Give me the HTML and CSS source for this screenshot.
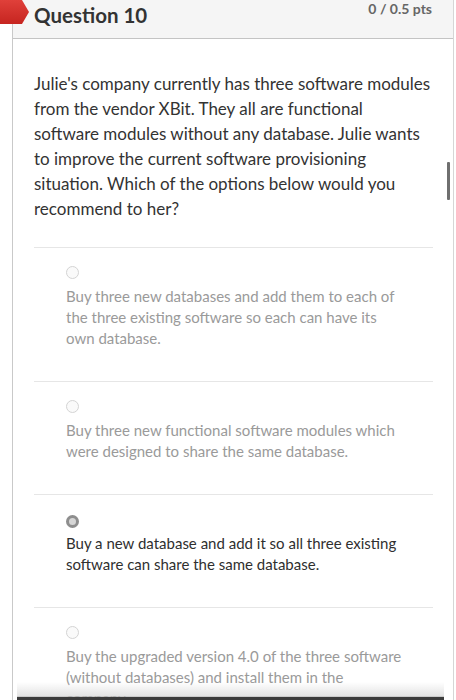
FILE: index.html
```html
<!DOCTYPE html>
<html lang="en">
<head>
<meta charset="utf-8">
<title>Question 10</title>
<link rel="stylesheet" href="styles.css">
</head>
<body>
<div class="card">
  <div class="flag"></div>
  <div class="header">
    <h2 class="title">Question 10</h2>
    <span class="pts">0 / 0.5 pts</span>
  </div>
  <div class="body">
    <p class="question">Julie's company currently has three software modules from the vendor XBit. They all are functional software modules without any database. Julie wants to improve the current software provisioning situation. Which of the options below would you recommend to her?</p>
    <div class="answers">
      <div class="answer">
        <span class="radio"></span>
        <p class="atext">Buy three new databases and add them to each of the three existing software so each can have its own database.</p>
      </div>
      <div class="answer">
        <span class="radio"></span>
        <p class="atext">Buy three new functional software modules which were designed to share the same database.</p>
      </div>
      <div class="answer selected">
        <span class="radio"></span>
        <p class="atext">Buy a new database and add it so all three existing software can share the same database.</p>
      </div>
      <div class="answer">
        <span class="radio"></span>
        <p class="atext">Buy the upgraded version 4.0 of the three software (without databases) and install them in the company.</p>
      </div>
    </div>
  </div>
  <div class="scrollbar"></div>
</div>
<div class="bottom-edge"></div>
</body>
</html>
```
FILE: styles.css
```css
html, body {
  margin: 0;
  padding: 0;
  background: #ffffff;
  height: 700px;
  overflow: hidden;
}
body {
  font-family: Lato, "Open Sans", Arial, sans-serif;
  color: #333333;
  position: relative;
}
.card {
  margin-left: 12px;
  width: 440px;
  border-left: 1px solid #c9c9c9;
  border-right: 1px solid #d6d6d6;
  min-height: 700px;
  position: relative;
}
.flag {
  position: absolute;
  left: -13px;
  top: 0;
  width: 29px;
  height: 24px;
  background: linear-gradient(180deg, #e0403a 0%, #c62520 100%);
  clip-path: polygon(0 0, 22px 0, 29px 12px, 22px 24px, 0 24px);
  z-index: 2;
}
.header {
  height: 38px;
  background: #f5f5f5;
  border-bottom: 1px solid #c4c4c4;
  display: flex;
  justify-content: space-between;
  align-items: flex-start;
  padding: 0 21px 0 21px;
}
.title {
  margin: 0;
  font-size: 20.5px;
  font-weight: 700;
  line-height: 20px;
  padding-top: 5px;
  color: #333333;
}
.pts {
  font-size: 14px;
  font-weight: 700;
  line-height: 16px;
  color: #666666;
  padding-top: 1px;
}
.body {
  padding: 32px 20px 0 21px;
}
.question {
  margin: 0;
  font-size: 17px;
  line-height: 25px;
  color: #333333;
  max-width: 398px;
}
.answers {
  margin-top: 26px;
}
.answer {
  border-top: 1px solid #e6e6e6;
  padding: 18px 0 32px 32px;
  display: flex;
  flex-direction: column;
  align-items: flex-start;
  gap: 7px;
}
.radio {
  width: 11px;
  height: 11px;
  border-radius: 50%;
  border: 1px solid #d4d4d4;
  background: #fafafa;
}
.atext {
  margin: 0;
  font-size: 15px;
  line-height: 21px;
  color: #9a9a9a;
  max-width: 336px;
}
.selected .atext {
  color: #2f2f2f;
}
.selected .radio {
  width: 7px;
  height: 7px;
  border: 3px solid #8e8e8e;
  background: #d6d6d6;
}
.selected {
  padding-top: 20px;
  gap: 5px;
}
.scrollbar {
  position: absolute;
  right: 3px;
  top: 162px;
  width: 3px;
  height: 38px;
  background: #6f6f6f;
  border-radius: 1px;
}
.bottom-edge {
  position: absolute;
  left: 17px;
  right: 12px;
  bottom: 0;
  height: 18px;
  background: linear-gradient(180deg, rgba(255,255,255,0) 0%, rgba(215,215,215,0.7) 80%, #3c3c3c 84%, #3c3c3c 100%);
  z-index: 3;
}
```
